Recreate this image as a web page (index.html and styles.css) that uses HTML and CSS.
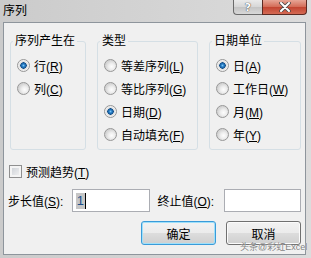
FILE: index.html
```html
<!DOCTYPE html>
<html lang="zh-CN">
<head>
    <meta charset="UTF-8">
    <title>序列</title>
    <link rel="stylesheet" href="styles.css">
</head>
<body>
    <div class="window">
        <div class="titlebar">
            <span class="title">序列</span>
            <div class="caption-buttons">
                <span class="btn-help">?</span>
                <span class="btn-close">
                    <svg width="12" height="10" viewBox="0 0 12 10">
                        <path d="M2 1 L10 9 M10 1 L2 9" stroke="#4a4a4a" stroke-width="3.6" stroke-linecap="round"/>
                        <path d="M2 1 L10 9 M10 1 L2 9" stroke="#fff" stroke-width="2" stroke-linecap="round"/>
                    </svg>
                </span>
            </div>
        </div>
        <div class="client">
            <div class="groups">
                <fieldset class="group group-series">
                    <legend>序列产生在</legend>
                    <label class="option"><input type="radio" name="series" checked><span>行(<u>R</u>)</span></label>
                    <label class="option"><input type="radio" name="series"><span>列(<u>C</u>)</span></label>
                </fieldset>
                <fieldset class="group group-type">
                    <legend>类型</legend>
                    <label class="option"><input type="radio" name="type"><span>等差序列(<u>L</u>)</span></label>
                    <label class="option"><input type="radio" name="type"><span>等比序列(<u>G</u>)</span></label>
                    <label class="option"><input type="radio" name="type" checked><span>日期(<u>D</u>)</span></label>
                    <label class="option"><input type="radio" name="type"><span>自动填充(<u>F</u>)</span></label>
                </fieldset>
                <fieldset class="group group-unit">
                    <legend>日期单位</legend>
                    <label class="option"><input type="radio" name="unit" checked><span>日(<u>A</u>)</span></label>
                    <label class="option"><input type="radio" name="unit"><span>工作日(<u>W</u>)</span></label>
                    <label class="option"><input type="radio" name="unit"><span>月(<u>M</u>)</span></label>
                    <label class="option"><input type="radio" name="unit"><span>年(<u>Y</u>)</span></label>
                </fieldset>
            </div>

            <label class="option trend"><input type="checkbox"><span>预测趋势(<u>T</u>)</span></label>

            <div class="values">
                <span class="value-label step-label">步长值(<u>S</u>):</span>
                <div class="textbox step-box"><span class="sel">1</span><span class="caret"></span></div>
                <span class="value-label stop-label">终止值(<u>O</u>):</span>
                <div class="textbox stop-box"></div>
            </div>

            <div class="actions">
                <button type="button" class="default">确定</button>
                <button type="button">取消</button>
            </div>
        </div>
        <span class="watermark">头条@彩虹Excel</span>
    </div>
</body>
</html>
```

FILE: styles.css
```css
body {
    margin: 0;
    font-family: "Liberation Sans", "Noto Sans CJK SC", sans-serif;
    font-size: 12px;
    color: #000;
}
.window {
    position: relative;
    width: 311px;
    height: 258px;
    box-sizing: border-box;
    padding: 0 5px 3px 3px;
    background: linear-gradient(to right, #cbcbcb, #dcdcdc);
    display: flex;
    flex-direction: column;
}
.titlebar {
    height: 22px;
    display: flex;
    align-items: flex-start;
}
.title {
    line-height: 22px;
    font-size: 12px;
}
.caption-buttons {
    margin-left: auto;
    margin-right: -1px;
    display: flex;
}
.btn-help,
.btn-close {
    height: 15px;
    box-sizing: border-box;
    border: 1px solid #6b6b6b;
    border-top: none;
    display: flex;
    align-items: center;
    justify-content: center;
}
.btn-help {
    width: 29px;
    border-right: none;
    border-bottom-left-radius: 4px;
    background: linear-gradient(#eaeaea, #d6d6d6 50%, #c4c4c4 51%, #d8d8d8);
    color: #fff;
    font-family: "DejaVu Sans", sans-serif;
    font-weight: bold;
    font-size: 11px;
    text-shadow: 0 0 1px #444, 0 0 1px #444;
}
.btn-close {
    width: 45px;
    border-color: #5c2a22;
    border-bottom-right-radius: 4px;
    background: linear-gradient(#e7a696, #d36a55 50%, #c24430 51%, #d46b55);
}

.client {
    flex: 1;
    background: #f0f0f0;
    border: 1px solid #8e959c;
    padding: 10px 4px 0 4px;
}
.groups {
    display: flex;
    gap: 11px;
    margin-left: 2px;
}
.group {
    margin: 0;
    min-width: 0;
    box-sizing: border-box;
    padding: 5px 0 3px 6px;
    border: 1px solid #d5dfe5;
    border-radius: 3px;
}
.group legend {
    padding: 0 2px;
    margin-left: -4px;
    line-height: 16px;
}
.group-series { width: 76px; }
.group-type { width: 101px; }
.group-unit { width: 92px; }

.option {
    display: flex;
    align-items: center;
    gap: 4px;
    height: 23px;
    white-space: nowrap;
}
.option input {
    appearance: none;
    -webkit-appearance: none;
    margin: 0;
    width: 13px;
    height: 13px;
    box-sizing: border-box;
    flex: none;
}
.option input[type="radio"] {
    border: 1px solid #979797;
    border-radius: 50%;
    background: radial-gradient(circle at 60% 60%, #fdfdfd 0, #eeeeee 3px, #d4d4d4 6px);
}
.option input[type="radio"]:checked {
    background: radial-gradient(circle at 50% 50%, #7cc6f7 0, #2a80c8 1.4px, #124f8a 3px, #dcdcdc 3.4px, #f4f4f4 5.5px);
}
.option input[type="checkbox"] {
    border: 1px solid #8f8f8f;
    box-shadow: inset 0 0 0 2px #f4f4f4;
    background: linear-gradient(135deg, #c8ccd2, #f6f6f6);
}
.trend {
    margin-top: 10px;
    margin-left: 1px;
}

.values {
    display: flex;
    align-items: center;
    margin-top: 6px;
}
.value-label {
    white-space: nowrap;
}
.step-label { width: 64px; }
.stop-label {
    width: 67px;
    margin-left: 8px;
}
.textbox {
    height: 23px;
    box-sizing: border-box;
    border: 1px solid #abadb3;
    background: #fff;
    display: flex;
    align-items: center;
    padding-left: 3px;
}
.step-box { width: 78px; }
.stop-box { width: 77px; }
.sel {
    background: #c6c6c6;
    color: #1d4e8a;
    font-size: 13px;
    line-height: 16px;
    padding: 0 1px;
}
.caret {
    width: 1px;
    height: 16px;
    background: #000;
}

.actions {
    display: flex;
    justify-content: flex-end;
    gap: 10px;
    margin-top: 9px;
}
button {
    width: 75px;
    height: 24px;
    border: 1px solid #707070;
    border-radius: 3px;
    background: linear-gradient(#f2f2f2, #ebebeb 50%, #dddddd 50%, #cfcfcf);
    box-shadow: inset 0 0 0 1px #fbfbfb;
    font-family: inherit;
    font-size: 12px;
    color: #000;
    padding: 0;
}
button.default {
    border-color: #3a9bd9;
    box-shadow: inset 0 0 0 1px #9fe0fa;
}
.watermark {
    position: absolute;
    left: 240px;
    top: 242px;
    font-size: 9px;
    line-height: 10px;
    color: #7f7f7f;
    text-shadow: 0 0 1px #fff;
    white-space: nowrap;
}
```
